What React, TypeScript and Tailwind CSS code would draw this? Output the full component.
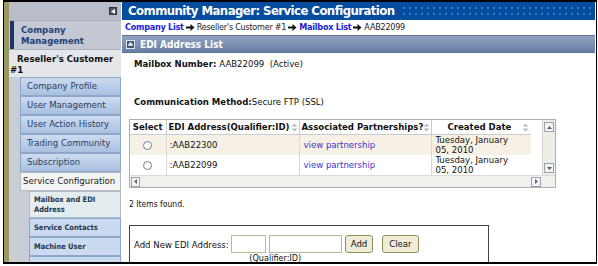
import React from 'react';

const font = { fontFamily: '"DejaVu Sans Condensed", "DejaVu Sans", Verdana, sans-serif' };

function Arrow() {
  return (
    <svg width="9" height="9" viewBox="0 0 9 9" className="mx-[2px] inline-block shrink-0">
      <path d="M0 3.5h4.5V1l4 3.5-4 3.5V5.5H0z" fill="#111" />
    </svg>
  );
}

function SortIcon() {
  return (
    <svg width="7" height="9" viewBox="0 0 7 9" className="shrink-0">
      <path d="M3.5 0.5L6.5 3.5H0.5z M3.5 8.5L0.5 5.5H6.5z" fill="#b4bcc4" />
    </svg>
  );
}

function Radio() {
  return <span className="block w-[9px] h-[9px] rounded-full border border-[#6b7f92] bg-white mx-auto" />;
}

const menu = ['Company Profile', 'User Management', 'User Action History', 'Trading Community', 'Subscription'];

function Sidebar() {
  return (
    <div className="w-[112px] shrink-0 flex flex-col overflow-hidden bg-[#c9cdd5] text-[#2c3d5a]">
      <div className="h-[18px] shrink-0 flex items-center justify-end pr-[4px] bg-[#b9bdc9]">
        <span className="w-[8px] h-[8px] bg-[#505868] border border-[#2c3340] flex items-center justify-center">
          <svg width="4" height="5" viewBox="0 0 4 5"><path d="M4 0v5L0 2.5z" fill="#fff" /></svg>
        </span>
      </div>
      <div className="h-[30px] shrink-0 flex items-stretch bg-[#c4c8d2] border-y border-[#aab0bc]">
        <span className="w-[4px] ml-[1px] bg-[#1d3566]" />
        <span className="pl-[7px] pt-[3px] text-[9.5px] leading-[11px] font-bold text-[#213f78]">Company<br />Management</span>
      </div>
      <div className="h-[27px] shrink-0 bg-[#e5e6e9] pl-[1px] indent-[7px] pt-[3px] text-[9.5px] leading-[11px] font-bold text-[#111]">
        Reseller's Customer #1
      </div>
      <div className="flex flex-col pl-[11px] bg-[#c9cdd5]">
        {menu.map((m) => (
          <div
            key={m}
            className="h-[19px] shrink-0 flex items-center pl-[6px] text-[9.5px] whitespace-nowrap border border-[#8ea6c9] bg-gradient-to-b from-[#cddcf0] to-[#a9c0e0]"
          >
            {m}
          </div>
        ))}
        <div className="h-[19px] shrink-0 flex items-center pl-[2px] text-[9.5px] whitespace-nowrap border border-[#b8bcc4] bg-[#f4f4f2] text-[#222]">
          Service Configuration
        </div>
        <div className="flex flex-col pl-[9px]">
          <div className="h-[27px] shrink-0 flex items-center pl-[4px] text-[7.5px] leading-[10px] font-semibold border border-[#b0bccc] bg-[#e3ecee] text-[#26344c]">
            Mailbox and EDI<br />Address
          </div>
          <div className="h-[19px] shrink-0 flex items-center pl-[4px] text-[7.5px] font-semibold border border-[#8ea6c9] bg-[#c9daf1] text-[#26344c]">
            Service Contacts
          </div>
          <div className="h-[19px] shrink-0 flex items-center pl-[4px] text-[7.5px] font-semibold border border-[#8ea6c9] bg-[#c9daf1] text-[#26344c]">
            Machine User
          </div>
          <div className="h-[19px] shrink-0 border border-[#8ea6c9] bg-[#c9daf1]" />
        </div>
      </div>
    </div>
  );
}

function EdiTable() {
  const rows = [
    { addr: ':AAB22300', bg: 'bg-[#f6f1e4]' },
    { addr: ':AAB22099', bg: 'bg-white' },
  ];
  return (
    <div className="ml-[7px] w-[427px] h-[69px] border border-[#a7aeb6] flex flex-col bg-[#f0f0ec]">
      <div className="flex flex-1">
        <table className="w-[401px] table-fixed border-collapse text-[9.5px] text-[#111] whitespace-nowrap">
          <colgroup>
            <col className="w-[36px]" />
            <col className="w-[133px]" />
            <col className="w-[132px]" />
            <col className="w-[100px]" />
          </colgroup>
          <thead>
            <tr className="h-[14px] bg-white font-bold">
              <th className="border-r border-b border-[#c9ccd0] text-center font-bold">Select</th>
              <th className="border-r border-b border-[#c9ccd0] font-bold">
                <div className="flex items-center justify-between pl-[2px] pr-[1px]">EDI Address(Qualifier:ID)<SortIcon /></div>
              </th>
              <th className="border-r border-b border-[#c9ccd0] font-bold">
                <div className="flex items-center justify-between pl-[2px] pr-[1px]">Associated Partnerships?<SortIcon /></div>
              </th>
              <th className="border-b border-[#c9ccd0] font-bold">
                <div className="flex items-center justify-between pl-[16px] pr-[2px]">Created Date<SortIcon /></div>
              </th>
            </tr>
          </thead>
          <tbody>
            {rows.map((r) => (
              <tr key={r.addr} className={`h-[20px] ${r.bg}`}>
                <td className="border-r border-[#d8d8d8]"><Radio /></td>
                <td className="border-r border-[#d8d8d8] pl-[3px]">{r.addr}</td>
                <td className="border-r border-[#d8d8d8] pl-[4px] text-[#3a33cc]">view partnership</td>
                <td className="pl-[4px] leading-[10px]">Tuesday, January<br />05, 2010</td>
              </tr>
            ))}
          </tbody>
        </table>
        <div className="flex-1 bg-white" />
        <div className="w-[13px] flex flex-col justify-between items-center py-[2px] bg-[#eeeee8] border-l border-[#d4d4d0]">
          <span className="w-[10px] h-[10px] border border-[#9aa4ae] bg-[#f4f4f4] flex items-center justify-center">
            <svg width="5" height="3" viewBox="0 0 5 3"><path d="M0 3L2.5 0 5 3z" fill="#5a6470" /></svg>
          </span>
          <span className="w-[10px] h-[10px] border border-[#9aa4ae] bg-[#f4f4f4] flex items-center justify-center">
            <svg width="5" height="3" viewBox="0 0 5 3"><path d="M0 0h5L2.5 3z" fill="#5a6470" /></svg>
          </span>
        </div>
      </div>
      <div className="h-[13px] flex items-center justify-between pl-[1px] pr-[14px] border-t border-[#dcdcd6]">
        <span className="w-[9px] h-[10px] border border-[#9aa4ae] bg-[#f4f4f4] flex items-center justify-center">
          <svg width="3" height="5" viewBox="0 0 3 5"><path d="M3 0v5L0 2.5z" fill="#5a6470" /></svg>
        </span>
        <span className="w-[10px] h-[10px] border border-[#9aa4ae] bg-[#f4f4f4] flex items-center justify-center">
          <svg width="3" height="5" viewBox="0 0 3 5"><path d="M0 0v5L3 2.5z" fill="#5a6470" /></svg>
        </span>
      </div>
    </div>
  );
}

function Main() {
  return (
    <div className="flex-1 flex flex-col bg-white ml-px mr-px">
      <div className="h-[18px] shrink-0 flex items-center bg-[#064c9e] pl-[6px]">
        <span className="text-[13px] leading-[18px] font-bold text-white tracking-[-0.55px] whitespace-nowrap">
          Community Manager: Service Configuration
        </span>
        <div className="flex-1 h-[12px] ml-[6px] bg-[radial-gradient(circle,#3d7cc4_0.8px,transparent_1px)] bg-[length:6px_6px]" />
      </div>
      <div className="h-[15px] shrink-0 flex items-center pl-[3px] text-[9px] tracking-[-0.25px] text-[#222] whitespace-nowrap">
        <span className="font-bold text-[#1d1dd8]">Company List</span>
        <Arrow />
        <span>Reseller's Customer #1</span>
        <Arrow />
        <span className="font-bold text-[#1d1dd8]">Mailbox List</span>
        <Arrow />
        <span>AAB22099</span>
      </div>
      <div className="h-[18px] shrink-0 flex items-center bg-gradient-to-b from-[#91a3c0] to-[#687fa5] border-y border-[#5d7296]">
        <span className="ml-[4px] w-[9px] h-[9px] border border-[#dfe6f0] bg-[#44587c] flex items-center justify-center">
          <svg width="5" height="4" viewBox="0 0 5 4"><path d="M0 3L2.5 0 5 3z" fill="#fff" /><rect x="0" y="3.3" width="5" height="0.7" fill="#fff" /></svg>
        </span>
        <span className="ml-[5px] text-[10px] font-bold text-white">EDI Address List</span>
      </div>
      <div className="pl-[12px] pt-[4px] text-[9.5px] text-[#111]">
        <div className="h-[14px] flex items-center whitespace-pre">
          <span className="font-bold">Mailbox Number: </span>AAB22099  (Active)
        </div>
        <div className="h-[24px]" />
        <div className="h-[14px] flex items-center">
          <span className="font-bold">Communication Method:</span>Secure FTP (SSL)
        </div>
      </div>
      <div className="mt-[10px]">
        <EdiTable />
      </div>
      <div className="pl-[7px] mt-[10px] text-[8.5px] text-[#111]">2 Items found.</div>
      <div className="ml-[7px] mt-[14px] w-[360px] flex-1 border border-b-0 border-[#444] flex items-start pl-[4px] pt-[9px] text-[9.5px] text-[#111]">
        <span className="mt-[3px]">Add New EDI Address:</span>
        <div className="ml-[2px] flex flex-col items-center">
          <div className="flex">
            <span className="w-[35px] h-[18px] border border-[#aebd9a] bg-white" />
            <span className="ml-[3px] w-[73px] h-[18px] border border-[#aebd9a] bg-white" />
          </div>
          <span className="mr-[22px] text-[9px] leading-[10px]">(Qualifier:ID)</span>
        </div>
        <span className="ml-[3px] h-[18px] px-[5px] flex items-center rounded-[3px] border border-[#8b8f5c] bg-[#f1ecd8]">Add</span>
        <span className="ml-[9px] h-[18px] px-[6px] flex items-center rounded-[3px] border border-[#8b8f5c] bg-[#f1ecd8]">Clear</span>
      </div>
    </div>
  );
}

export default function App() {
  return (
    <div className="w-[598px] h-[266px] bg-white pl-[3px]" style={font}>
      <div className="w-[594px] h-[264px] border-l border-t-2 border-r border-b-2 border-black flex overflow-hidden">
        <div className="w-[5px] shrink-0 bg-[#9a9a60]" />
        <Sidebar />
        <Main />
      </div>
    </div>
  );
}
